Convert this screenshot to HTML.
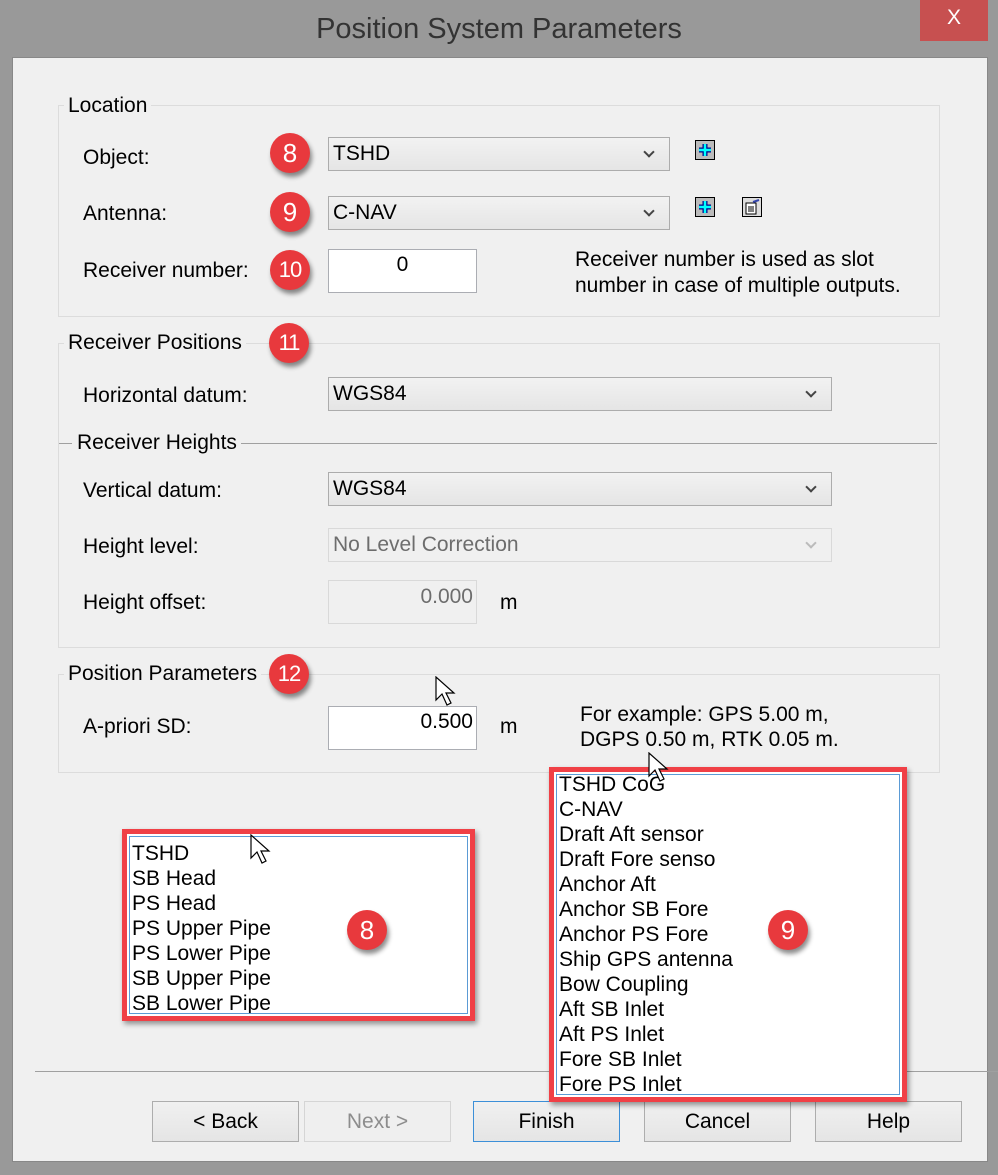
<!DOCTYPE html>
<html><head><meta charset="utf-8">
<style>
*{box-sizing:border-box;margin:0;padding:0}
body{width:998px;height:1175px;background:#999;position:relative;overflow:hidden;font-family:"Liberation Sans",Arial,sans-serif;font-size:21px;color:#000}
.a{position:absolute}
.win{left:12px;top:57px;width:976px;height:1105px;background:#f0f0f0;border:1px solid #888}
.title{left:0;top:13px;width:998px;text-align:center;font-size:29px;color:#333}
.close{left:920px;top:0;width:68px;height:41px;background:#c75050;color:#fff;font-size:21px;text-align:center;line-height:36px}
.grp{border:1px solid #dcdcdc}
.lbl{background:#f0f0f0;padding:0 4px 0 0}
.combo{height:34px;border:1px solid #acacac;background:linear-gradient(#f2f2f2,#e5e5e5);padding-left:4px;line-height:32px}
.combo::after{content:"";position:absolute;right:16px;top:10px;width:6px;height:6px;border-right:2px solid #444;border-bottom:2px solid #444;transform:rotate(45deg)}
.combo.dis{background:#f0f0f0;border-color:#d9d9d9;color:#6d6d6d}
.combo.dis::after{border-color:#bbb}
.inp{border:1px solid #abadb3;background:#fff;height:44px}
.badge{width:40px;height:40px;border-radius:50%;background:#e8393d;color:#fff;font-size:26px;text-align:center;line-height:40px;box-shadow:2px 4px 5px rgba(0,0,0,.45)}
.badge.s{font-size:22px;letter-spacing:-1px}
.btn{top:1101px;width:147px;height:41px;border:1px solid #adadad;background:linear-gradient(#f0f0f0,#e5e5e5);text-align:center;line-height:39px;font-size:21px}
.redbox{border:5px solid #f04046;background:#fff;box-shadow:2px 3px 5px rgba(0,0,0,.4)}
.list{position:absolute;left:2px;top:2px;right:2px;bottom:2px;border:1px solid #5b9bd5;padding-left:2px;font-size:21px;overflow:hidden}
.list div{height:25px;line-height:25px}
.ib{width:20px;height:20px;border:1px solid #000;background:#bbb}
</style></head><body>
<div class="a title">Position System Parameters</div>
<div class="a close">X</div>
<div class="a win"></div>

<div class="a grp" style="left:58px;top:105px;width:882px;height:212px"></div>
<div class="a lbl" style="left:64px;top:94px;padding-left:4px">Location</div>
<div class="a" style="left:83px;top:146px">Object:</div>
<div class="a badge" style="left:270px;top:133px">8</div>
<div class="a combo" style="left:328px;top:137px;width:342px">TSHD</div>
<div class="a ib" style="left:695px;top:140px"><svg width="18" height="18"><path d="M9 3V15M3 9H15" stroke="#00008b" stroke-width="5"/><path d="M9 3V15M3 9H15" stroke="#0ff" stroke-width="2.5"/></svg></div>
<div class="a" style="left:83px;top:202px">Antenna:</div>
<div class="a badge" style="left:270px;top:192px">9</div>
<div class="a combo" style="left:328px;top:196px;width:342px">C-NAV</div>
<div class="a ib" style="left:695px;top:197px"><svg width="18" height="18"><path d="M9 3V15M3 9H15" stroke="#00008b" stroke-width="5"/><path d="M9 3V15M3 9H15" stroke="#0ff" stroke-width="2.5"/></svg></div>
<div class="a ib" style="left:742px;top:197px;background:#ddd"><svg width="18" height="18"><rect x="3" y="5" width="10" height="11" fill="#fff" stroke="#000"/><path d="M5 9H11M5 11H11M5 13H11" stroke="#000"/><path d="M10 4L16 2" stroke="#34a" stroke-width="2"/></svg></div>
<div class="a" style="left:83px;top:259px">Receiver number:</div>
<div class="a badge s" style="left:270px;top:250px">10</div>
<div class="a inp" style="left:328px;top:249px;width:149px;text-align:center;padding-top:3px">0</div>
<div class="a" style="left:575px;top:247px;line-height:26px">Receiver number is used as slot<br>number in case of multiple outputs.</div>

<div class="a grp" style="left:58px;top:343px;width:882px;height:305px"></div>
<div class="a lbl" style="left:64px;top:331px;padding-left:4px">Receiver Positions</div>
<div class="a badge s" style="left:269px;top:323px">11</div>
<div class="a" style="left:83px;top:384px">Horizontal datum:</div>
<div class="a combo" style="left:328px;top:377px;width:504px">WGS84</div>
<div class="a" style="left:59px;top:443px;width:878px;border-top:1px solid #a0a0a0"></div>
<div class="a lbl" style="left:72px;top:431px;padding-left:5px">Receiver Heights</div>
<div class="a" style="left:83px;top:479px">Vertical datum:</div>
<div class="a combo" style="left:328px;top:472px;width:504px">WGS84</div>
<div class="a" style="left:83px;top:535px">Height level:</div>
<div class="a combo dis" style="left:328px;top:528px;width:504px">No Level Correction</div>
<div class="a" style="left:83px;top:591px">Height offset:</div>
<div class="a inp" style="left:328px;top:580px;width:149px;background:#f0f0f0;border-color:#d9d9d9;color:#6d6d6d;text-align:right;padding:4px 3px 0 0">0.000</div>
<div class="a" style="left:500px;top:591px">m</div>

<div class="a grp" style="left:58px;top:674px;width:882px;height:99px"></div>
<div class="a lbl" style="left:64px;top:662px;padding-left:4px">Position Parameters</div>
<div class="a badge s" style="left:269px;top:654px">12</div>
<div class="a" style="left:83px;top:715px">A-priori SD:</div>
<div class="a inp" style="left:328px;top:706px;width:149px;text-align:right;padding:3px 3px 0 0">0.500</div>
<div class="a" style="left:500px;top:715px">m</div>
<div class="a" style="left:580px;top:702px;line-height:25px">For example: GPS 5.00 m,<br>DGPS 0.50 m, RTK 0.05 m.</div>

<div class="a" style="left:35px;top:1071px;width:963px;border-top:1px solid #a0a0a0"></div>

<div class="a btn" style="left:152px">&lt; Back</div>
<div class="a btn" style="left:304px;color:#8d8d8d;border-color:#d5d5d5;background:#efefef">Next &gt;</div>
<div class="a btn" style="left:473px;border-color:#3c8fd8">Finish</div>
<div class="a btn" style="left:644px">Cancel</div>
<div class="a btn" style="left:815px">Help</div>

<div class="a redbox" style="left:122px;top:829px;width:353px;height:192px">
<div class="list" style="padding-top:4px"><div>TSHD</div><div>SB Head</div><div>PS Head</div><div>PS Upper Pipe</div><div>PS Lower Pipe</div><div>SB Upper Pipe</div><div>SB Lower Pipe</div></div>
</div>
<div class="a badge" style="left:347px;top:910px">8</div>

<div class="a redbox" style="left:549px;top:767px;width:358px;height:335px">
<div class="list"><div style="margin-top:-3px">TSHD CoG</div><div>C-NAV</div><div>Draft Aft sensor</div><div>Draft Fore senso</div><div>Anchor Aft</div><div>Anchor SB Fore</div><div>Anchor PS Fore</div><div>Ship GPS antenna</div><div>Bow Coupling</div><div>Aft SB Inlet</div><div>Aft PS Inlet</div><div>Fore SB Inlet</div><div>Fore PS Inlet</div></div>
</div>
<div class="a badge" style="left:768px;top:910px">9</div>

<svg class="a" style="left:435px;top:676px" width="22" height="32"><path d="M1 1V24L7 18L12 29L16 27L11 17H19Z" fill="#fff" stroke="#000" stroke-width="1.2"/></svg>
<svg class="a" style="left:648px;top:752px" width="22" height="32"><path d="M1 1V24L7 18L12 29L16 27L11 17H19Z" fill="#fff" stroke="#000" stroke-width="1.2"/></svg>
<svg class="a" style="left:250px;top:834px" width="22" height="32"><path d="M1 1V24L7 18L12 29L16 27L11 17H19Z" fill="#fff" stroke="#000" stroke-width="1.2"/></svg>
</body></html>
